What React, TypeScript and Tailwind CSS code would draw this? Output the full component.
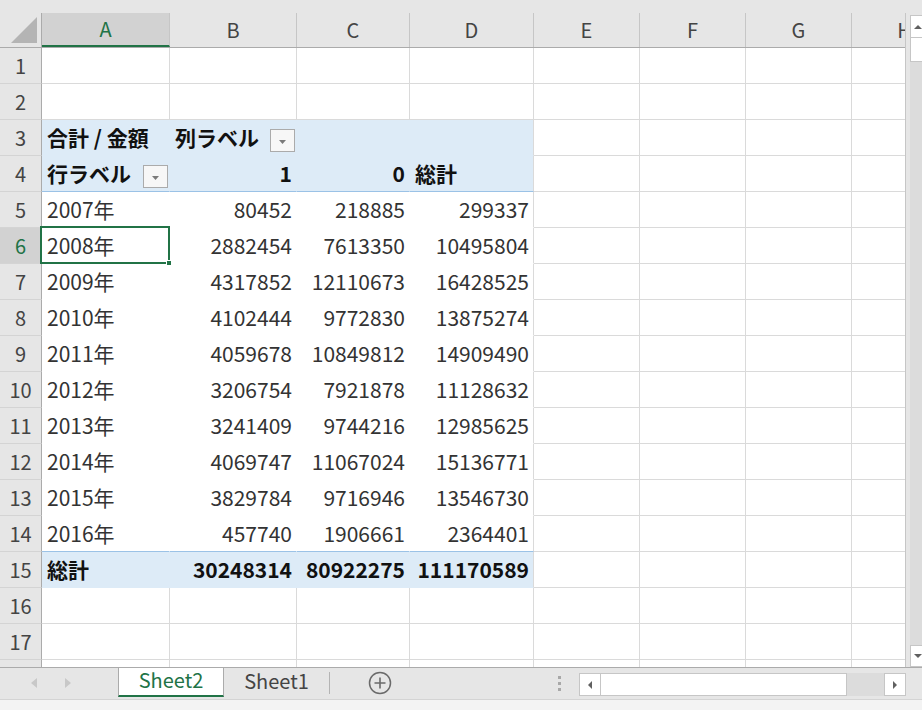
import React from "react";

const COLS = [128, 127, 113, 124, 106, 106, 106, 106];
const LETTERS = ["A", "B", "C", "D", "E", "F", "G", "H"];

const DATA: [string, string, string, string][] = [
  ["2007年", "80452", "218885", "299337"],
  ["2008年", "2882454", "7613350", "10495804"],
  ["2009年", "4317852", "12110673", "16428525"],
  ["2010年", "4102444", "9772830", "13875274"],
  ["2011年", "4059678", "10849812", "14909490"],
  ["2012年", "3206754", "7921878", "11128632"],
  ["2013年", "3241409", "9744216", "12985625"],
  ["2014年", "4069747", "11067024", "15136771"],
  ["2015年", "3829784", "9716946", "13546730"],
  ["2016年", "457740", "1906661", "2364401"],
];

const TOTAL = ["総計", "30248314", "80922275", "111170589"];

function FilterButton() {
  return (
    <div className="ml-auto mt-[6px] mr-[1px] flex h-[23px] w-[25px] shrink-0 items-center justify-center border border-[#ababab] bg-[#f7f7f7]">
      <svg width="9" height="6" viewBox="0 0 9 6" className="mt-[3px]">
        <path d="M1 1 L8 1 L4.5 5 Z" fill="#7a7a7a" />
      </svg>
    </div>
  );
}

// what goes into the pivot part of the sheet (rows 3-15, columns A-D)
function cellContent(row: number, col: number) {
  if (row === 3) {
    if (col === 0) return { t: "合計 / 金額", bold: true };
    if (col === 1) return { t: "列ラベル", bold: true, filter: true };
    return {};
  }
  if (row === 4) {
    if (col === 0) return { t: "行ラベル", bold: true, filter: true };
    if (col === 1) return { t: "1", bold: true, right: true };
    if (col === 2) return { t: "0", bold: true, right: true };
    if (col === 3) return { t: "総計", bold: true };
    return {};
  }
  if (row >= 5 && row <= 14) {
    const d = DATA[row - 5];
    return { t: d[col], right: col > 0 };
  }
  if (row === 15) return { t: TOTAL[col], bold: true, right: col > 0 };
  return {};
}

function Cell({ row, col }: { row: number; col: number }) {
  const pivot = row >= 3 && row <= 15 && col <= 3;
  const blue = pivot && (row === 3 || row === 4 || row === 15);

  let bg = "bg-white";
  let br = "border-r-[#dadada]";
  let bb = "border-b-[#dadada]";
  if (pivot) {
    bg = blue ? "bg-[#ddebf7]" : "bg-white";
    if (col < 3) br = blue ? "border-r-[#ddebf7]" : "border-r-white";
    if (row === 4 || row === 14) bb = "border-b-[#9bc2e6]";
    else if (row === 15) bb = "border-b-[#ddebf7]";
    else bb = blue ? "border-b-[#ddebf7]" : "border-b-white";
  }

  const c: { t?: string; bold?: boolean; right?: boolean; filter?: boolean } = pivot ? cellContent(row, col) : {};

  return (
    <div
      className={`relative flex h-[36px] shrink-0 items-center border-r border-b ${bg} ${br} ${bb} ${
        c.right ? "justify-end pr-[4px]" : "pl-[5px]"
      }`}
      style={{ width: COLS[col] }}
    >
      {c.t && (
        <span className={`whitespace-nowrap leading-[35px] ${c.bold ? "font-bold text-[#111]" : "text-[#333]"}`}>
          {c.t}
        </span>
      )}
      {c.filter && <FilterButton />}
      {row === 6 && col === 0 && (
        <div className="absolute -left-[2px] -top-[2px] -right-[1px] -bottom-[1px] z-10 border-2 border-[#217346]">
          <div className="absolute -right-[4px] -bottom-[4px] h-[6px] w-[6px] border border-white bg-[#217346]" />
        </div>
      )}
    </div>
  );
}

function Grid() {
  const rows = Array.from({ length: 18 }, (_, i) => i + 1);
  return (
    <div className="flex flex-col">
      {/* column headers */}
      <div className="flex h-[35px] border-b border-[#ababab] bg-[#e6e6e6]">
        <div className="flex w-[42px] shrink-0 items-end justify-end border-r border-[#ababab] pb-[4px] pr-[4px]">
          <svg width="26" height="26" viewBox="0 0 26 26">
            <path d="M26 0 L26 26 L0 26 Z" fill="#b4b4b4" />
          </svg>
        </div>
        {LETTERS.map((l, i) => (
          <div
            key={l}
            className={`flex shrink-0 items-center justify-center border-r border-[#c6c6c6] text-[20px] ${
              i === 0 ? "border-b-2 border-b-[#217346] bg-[#d2d2d2] text-[#217346]" : "text-[#444]"
            }`}
            style={{ width: COLS[i] }}
          >
            {l}
          </div>
        ))}
      </div>

      {rows.map((r) => (
        <div key={r} className="flex">
          <div
            className={`flex h-[36px] w-[42px] shrink-0 items-center justify-center border-r border-b border-r-[#ababab] border-b-[#d4d4d4] text-[20px] ${
              r === 6 ? "bg-[#d2d2d2] text-[#217346]" : "bg-[#e6e6e6] text-[#444]"
            }`}
          >
            {r}
          </div>
          {COLS.map((_, c) => (
            <Cell key={c} row={r} col={c} />
          ))}
        </div>
      ))}
    </div>
  );
}

function VScroll() {
  return (
    <div className="flex w-[16px] shrink-0 flex-col bg-[#e6e6e6] pl-[4px] pt-[2px]">
      <div className="flex h-[23px] w-[20px] items-center justify-center border border-[#c6c6c6] bg-white">
        <svg width="10" height="6" viewBox="0 0 10 6" className="-ml-[4px]">
          <path d="M1 5 L9 5 L5 1 Z" fill="#606060" />
        </svg>
      </div>
      <div className="h-[24px] w-[20px] border border-t-0 border-[#c6c6c6] bg-white" />
      <div className="flex-1 bg-[#dcdcdc]" />
      <div className="flex h-[22px] w-[20px] items-center justify-center border border-[#c6c6c6] bg-white">
        <svg width="10" height="6" viewBox="0 0 10 6" className="-ml-[4px]">
          <path d="M1 1 L9 1 L5 5 Z" fill="#606060" />
        </svg>
      </div>
    </div>
  );
}

function TabBar() {
  return (
    <div className="flex h-[32px] shrink-0 border-t border-[#ababab] bg-[#e6e6e6]">
      <div className="flex w-[118px] items-center gap-[18px] pl-[30px] pb-[2px]">
        <svg width="8" height="12" viewBox="0 0 8 12">
          <path d="M7 1 L1 6 L7 11 Z" fill="#c8c8c8" />
        </svg>
        <svg width="8" height="12" viewBox="0 0 8 12" className="ml-[8px]">
          <path d="M1 1 L7 6 L1 11 Z" fill="#c8c8c8" />
        </svg>
      </div>
      <div className="flex h-[29px] w-[106px] items-center justify-center border-x border-b-2 border-x-[#ababab] border-b-[#217346] bg-white pb-[3px] text-[20px] text-[#217346]">
        Sheet2
      </div>
      <div className="flex h-[29px] w-[105px] items-center justify-center pb-[3px] text-[20px] text-[#444]">
        Sheet1
      </div>
      <div className="mt-[4px] h-[22px] w-px bg-[#b4b4b4]" />
      <div className="flex w-[100px] items-center justify-center pb-[2px]">
        <svg width="24" height="24" viewBox="0 0 24 24">
          <circle cx="12" cy="12" r="10.5" fill="none" stroke="#6a6a6a" strokeWidth="1.5" />
          <path d="M12 6.5 V17.5 M6.5 12 H17.5" stroke="#6a6a6a" strokeWidth="1.6" />
        </svg>
      </div>
      <div className="flex w-[149px] items-center justify-end pr-[18px]">
        <div className="flex flex-col gap-[3px]">
          <div className="h-[3px] w-[3px] bg-[#a8a8a8]" />
          <div className="h-[3px] w-[3px] bg-[#a8a8a8]" />
          <div className="h-[3px] w-[3px] bg-[#a8a8a8]" />
        </div>
      </div>
      {/* horizontal scrollbar */}
      <div className="mt-[5px] flex h-[23px] w-[327px] bg-[#dcdcdc]">
        <div className="flex w-[22px] items-center justify-center border border-[#c6c6c6] bg-white">
          <svg width="6" height="10" viewBox="0 0 6 10">
            <path d="M5 1 L5 9 L1 5 Z" fill="#606060" />
          </svg>
        </div>
        <div className="w-[246px] border border-l-0 border-[#c6c6c6] bg-white" />
        <div className="flex-1" />
        <div className="flex w-[22px] items-center justify-center border border-[#c6c6c6] bg-white">
          <svg width="6" height="10" viewBox="0 0 6 10">
            <path d="M1 1 L1 9 L5 5 Z" fill="#606060" />
          </svg>
        </div>
      </div>
      <div className="flex-1" />
    </div>
  );
}

export default function App() {
  return (
    <div
      className="flex h-[710px] w-[922px] flex-col overflow-hidden bg-[#e6e6e6] text-[21px]"
      style={{ fontFamily: '"Noto Sans CJK JP", "Noto Sans", sans-serif' }}
    >
      <div className="h-[13px] shrink-0" />
      <div className="flex h-[654px] shrink-0">
        <div className="w-[906px] shrink-0 overflow-hidden border-r border-[#c6c6c6] bg-white">
          <Grid />
        </div>
        <VScroll />
      </div>
      <TabBar />
      <div className="flex h-[24px] shrink-0 items-start gap-[20px] border-t border-[#d4d4d4] bg-[#f3f3f3] pl-[8px] pt-[6px] text-[15px] text-[#888]">
        <span>準備完了</span>
        <span>記</span>
      </div>
    </div>
  );
}
